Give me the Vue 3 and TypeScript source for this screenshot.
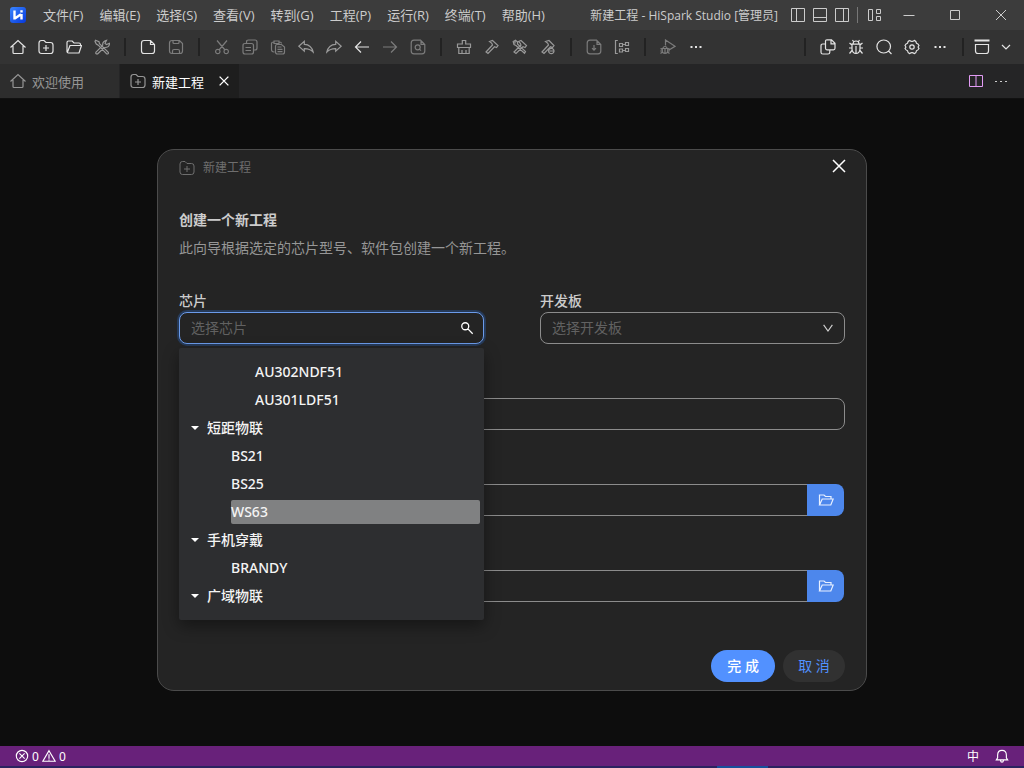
<script setup lang="ts">
import { ref } from 'vue'

interface Tool {
  icon: string
  label: string
  tone?: 'bright' | 'dim' | 'mid'
}

const icons: Record<string, string> = {
  home: 'M.5 8.500 8 1.500 15.500 8.500M3 7v6.500q0 1 1 1h8q1 0 1-1V7',
  newProject: 'M1 4q0-2.500 2.500-2.500H6L8 3.500h4.500Q15 3.500 15 6v6q0 2.500-2.500 2.500h-9Q1 14.500 1 12zM8 6v6M5 9h6',
  folder: 'M1 13V3.500Q1 2 2.500 2h3.700l1.800 2h5q1.500 0 1.500 1.500V6.500M1.500 13 4 6.500h11.500l-2.500 7.500H2.500Q1 14 1 12.500',
  tools: 'M1.500 13.700 8.800 6.300M3.500 15 10.300 8.500M1.500 13.700q.5 1.500 2 1.300M8.800 6.300Q8 2.500 12.500 1.300l-1.500 3 1.500 1.300 3-1.300q0 4.500-5.200 4.200M1.500 1.300 5 2.800l.5 2 8.800 8.400q.5 2-1.600 1.800L4.300 6.200 2.300 5 1 2.500z',
  file: 'M10.500 1.500H4Q1.500 1.500 1.500 4v8q0 2.500 2.500 2.500h8q2.500 0 2.500-2.500V5.500zM10.500 1.500v4h4',
  save: 'M1.500 4q0-2.500 2.500-2.500h7.500l3 3V12q0 2.500-2.500 2.500H4Q1.500 14.500 1.500 12zM5 1.500v2q0 1 1 1h4q1 0 1-1v-2M4.500 14.500V12q0-1.500 1.500-1.500h4q1.500 0 1.500 1.500v2.500',
  cut: 'M3 1.500 11 11M13 1.500 5 11M6 12.500a2.200 2.200 0 1 1-4.400 0a2.200 2.200 0 1 1 4.400 0M14.400 12.500a2.200 2.200 0 1 1-4.400 0a2.200 2.200 0 1 1 4.400 0',
  copy: 'M4.500 4V3q0-2 2-2H13q2 0 2 2v6q0 2-2 2h-1.500M3 4.500h6.500q2 0 2 2V13q0 2-2 2H3q-2 0-2-2V6.500q0-2 2-2zM3.500 8.500H9M3.500 11.500H9',
  paste: 'M4.500 13H4q-2.500 0-2.500-2.500v-6Q1.500 3 3.500 3M9.500 3q2 0 2 1.500M4 4.500V2h5v2.500zM7 5.500h4.500L14.500 8v5q0 2-2 2H7.500q-2 0-2-2V7.500q0-2 1.500-2zM7.500 8h4M7.500 10.300h5M7.500 12.600h5',
  undo: 'M.8 7.200 6.300 2.300V5.300Q13.500 5.500 15.200 13.200 11.500 9.500 6.300 9.700v2.500z',
  redo: 'M15.200 7.200 9.700 2.300V5.300Q2.500 5.500.8 13.200 4.500 9.500 9.700 9.700v2.500z',
  left: 'M15 8H1.500M7 2.500 1.500 8 7 13.500',
  right: 'M1 8h13.500M9 2.500 14.500 8 9 13.500',
  findFile: 'M10.500 1.200H4Q1.200 1.200 1.200 4v8q0 2.800 2.800 2.800h8q2.800 0 2.800-2.800V5.500zM11 1.500v3.800h3.500M10.200 8.300a2.500 2.500 0 1 1-5 0a2.500 2.500 0 1 1 5 0M9.500 10.200l1.500 1.500',
  clean: 'M6.300 5V1.500h3.400V5h4.800v3.500h-13V5zM2.800 8.500V14.500h10.400v-6M6 14.500V11M10 14.500V11',
  hammer: 'M5.500 2.500 8.500 1.500 14 6.500 12.500 8.500 10.500 7.800 4 14.500 2 13 8.500 6 7.800 4.300z',
  hammers: 'M6.500 2.500 9 1.500 14.500 6.500 13 8.500 11 7.800 4 14.500 2 13 9 6 8.300 4.300zM1.200 2.500 3.500 1.300 5.500 3v2L13.500 12.500 12.500 14.200 4 6.500 2 5.500zM3 2v2.500',
  hammerStop: 'M5.500 2.500 9 1.500 14 6.500 12.500 8.500 10.500 7.800 4 14.500 2 13 8.500 6 7.800 4.300zM14 12a2.700 2.700 0 1 1-5.400 0a2.700 2.700 0 1 1 5.400 0M9.500 12h4',
  download: 'M10.500 1.200H4Q1.200 1.200 1.200 4v8q0 2.800 2.800 2.800h8q2.800 0 2.800-2.800V5.500zM11 1.500v3.800h3.500M8 6v5M6 9.200l2 2 2-2',
  memory: 'M3.800 1.500H1.500v13h2.300M5.500 4.500h3v3h-3zM11.500 3.500h3v3h-3zM5.500 10h3v3h-3zM11.500 9.500h3v3h-3zM8.500 5.500h3M8.500 11.500h3',
  debugRun: 'M5.500 6.500V1L15 7.300 9 11M3 9.500a2 2 0 0 1 4 0M2.300 9.500h5.400v3q-.5 2-2.700 2-2.200 0-2.700-2zM.5 9.500l1.800 1M9.500 9.500l-1.800 1M.5 14.500l2-1.500M9.500 14.500l-2-1.500M5 10v4M.3 12h2M7.700 12h2',
  pages: 'M7 .8h4.500L15 4.300v5q0 1.500-1.500 1.500H7Q5.500 10.800 5.500 9.300v-7Q5.500.8 7 .8M11 1v3.800h4M5.500 5H2.800Q1 5 1 6.800V13.200Q1 15 2.800 15H8q1.800 0 1.800-1.800V11',
  bug: 'M5 5a3 3 0 0 1 6 0M4 5.200h8v5q-.5 4-4 4.300-3.500-.3-4-4.300zM8 7v7.500M4 6 1.500 4M12 6l2.500-2M1 9h3M12 9h3M4 11.500 1.500 14.500M12 11.500l2.500 3M5.500 2.500 4.500 1M10.500 2.500l1-1.500',
  search: 'M14.500 7.500a6.800 6.500 0 1 1-13.600 0a6.800 6.500 0 1 1 13.600 0M12.500 12l3 3',
  gear: 'M5.700 1.400Q8 3.500 10.300 1.400q2 .7 2.200 2.900 2 .7 2.500 2.300-1.700 1.400 0 2.800-.5 1.600-2.500 2.300-.2 2.200-2.200 2.900Q8 12.500 5.700 14.600q-2-.7-2.200-2.900Q1.500 11 1 9.400q1.700-1.400 0-2.800.5-1.600 2.500-2.300.2-2.200 2.200-2.900M10.200 8a2.200 2.200 0 1 1-4.400 0a2.200 2.200 0 1 1 4.400 0',
  more: 'M2.500 7h2v2h-2zM7 7h2v2H7zM11.500 7h2v2h-2z',
  moreThin: 'M2 8h2v1H2zM7 8h2v1H7zM12 8h2v1h-2z',
  panel: 'M.5 1h15M.5 2h15M1.500 5.500V12q0 2.500 2.500 2.500h8q2.500 0 2.500-2.500V5.500z',
  down: 'M4 6l4 4 4-4',
  sideLeft: 'M1.500 1.500h13v13h-13zM6.500 1.500v13',
  bottomPane: 'M1.500 1.500h13v13h-13zM1.500 10.500h13',
  sideRight: 'M1.500 1.500h13v13h-13zM9.500 1.500v13',
  layout: 'M1.500 2.500h4v11h-4zM9.500 2.500h4v4h-4zM9.500 9.500h4v4h-4z',
  minimize: 'M2.500 8.500h11',
  maximize: 'M3.500 3.500h9v9h-9z',
  close: 'M3 3l10 10M13 3 3 13',
  split: 'M1.500 2.500h13v11h-13zM8 2.500v11',
  glass: 'M10 6a4 4 0 1 1-8 0a4 4 0 1 1 8 0M9 9l5.500 5.500',
  openDir: 'M1.500 13V3h4.500l1.500 1.500h5.500V7M1.500 13 4.200 7h11L12.800 13z',
  error: 'M14.500 8a6.500 6.500 0 1 1-13 0a6.500 6.500 0 1 1 13 0M5 5l6 6M11 5l-6 6',
  warning: 'M8 2 15 14H1zM8 6v5M8 12v1',
  bell: 'M1.500 12.500h13L13 10V7Q13 1.500 8 1.500T3 7v3zM6.300 13q.2 2 1.700 2t1.700-2',
}

const menus: string[] = ['文件(F)', '编辑(E)', '选择(S)', '查看(V)', '转到(G)', '工程(P)', '运行(R)', '终端(T)', '帮助(H)']

const leftTools: Tool[][] = [
  [
    { icon: 'home', label: '主页', tone: 'bright' },
    { icon: 'newProject', label: '新建工程', tone: 'bright' },
    { icon: 'folder', label: '打开工程', tone: 'bright' },
    { icon: 'tools', label: '工具', tone: 'mid' },
  ],
  [
    { icon: 'file', label: '新建文件', tone: 'bright' },
    { icon: 'save', label: '保存' },
  ],
  [
    { icon: 'cut', label: '剪切' },
    { icon: 'copy', label: '复制' },
    { icon: 'paste', label: '粘贴' },
    { icon: 'undo', label: '撤销', tone: 'mid' },
    { icon: 'redo', label: '重做', tone: 'mid' },
    { icon: 'left', label: '后退', tone: 'bright' },
    { icon: 'right', label: '前进' },
    { icon: 'findFile', label: '查找' },
  ],
  [
    { icon: 'clean', label: '清理', tone: 'mid' },
    { icon: 'hammer', label: '编译', tone: 'mid' },
    { icon: 'hammers', label: '重新编译', tone: 'mid' },
    { icon: 'hammerStop', label: '停止编译', tone: 'mid' },
  ],
  [
    { icon: 'download', label: '烧录' },
    { icon: 'memory', label: '内存分析', tone: 'mid' },
  ],
  [
    { icon: 'debugRun', label: '调试' },
    { icon: 'more', label: '更多', tone: 'bright' },
  ],
]

const rightTools: Tool[] = [
  { icon: 'pages', label: '资源管理器' },
  { icon: 'bug', label: '调试视图' },
  { icon: 'search', label: '搜索' },
  { icon: 'gear', label: '设置' },
  { icon: 'more', label: '更多视图' },
]

const paneTools: Tool[] = [
  { icon: 'sideLeft', label: '左侧栏' },
  { icon: 'bottomPane', label: '底部面板' },
  { icon: 'sideRight', label: '右侧栏' },
]

const windowTools: Tool[] = [
  { icon: 'minimize', label: '最小化' },
  { icon: 'maximize', label: '最大化' },
  { icon: 'close', label: '关闭窗口' },
]

const chips = [
  { name: 'AU302NDF51', level: 3 },
  { name: 'AU301LDF51', level: 3 },
  { name: '短距物联', level: 1 },
  { name: 'BS21', level: 2 },
  { name: 'BS25', level: 2 },
  { name: 'WS63', level: 2 },
  { name: '手机穿戴', level: 1 },
  { name: 'BRANDY', level: 2 },
  { name: '广域物联', level: 1 },
]

const hovered = ref('WS63')
const chip = ref('')
const board = ref('')
const projectName = ref('')
const projectPath = ref('')
const packagePath = ref('')
</script>

<template>
  <div class="app">
    <header class="titlebar">
      <svg class="logo" viewBox="0 0 16 16" aria-hidden="true">
        <defs>
          <linearGradient id="logo-fill" x1="0" y1="0" x2="1" y2="1">
            <stop offset="0" stop-color="#3a86ff" />
            <stop offset="1" stop-color="#0638dc" />
          </linearGradient>
        </defs>
        <rect width="16" height="16" rx="3" fill="url(#logo-fill)" />
        <path d="M4.500 3.500v9M4.800 11.500 11 7.200M11.500 7v5.500" fill="none" stroke="#fff" stroke-width="2.400" />
        <path d="M10.300 3.200h2.400v2.400h-2.400z" fill="#fff" />
      </svg>
      <nav class="menus">
        <button v-for="m in menus" :key="m" class="menu" type="button">{{ m }}</button>
      </nav>
      <span class="title">新建工程 - HiSpark Studio [管理员]</span>
      <div class="panes">
        <button v-for="t in paneTools" :key="t.icon" class="pane" type="button" :aria-label="t.label">
          <svg class="icon" viewBox="0 0 16 16"><path :d="icons[t.icon]" /></svg>
        </button>
        <span class="rule"></span>
        <button class="pane" type="button" aria-label="布局">
          <svg class="icon" viewBox="0 0 16 16"><path :d="icons.layout" /></svg>
        </button>
      </div>
      <button v-for="t in windowTools" :key="t.icon" class="win" type="button" :aria-label="t.label">
        <svg class="icon" viewBox="0 0 16 16"><path :d="icons[t.icon]" /></svg>
      </button>
    </header>

    <div class="toolbar" role="toolbar">
      <div v-for="(group, i) in leftTools" :key="i" class="group">
        <button v-for="t in group" :key="t.icon" class="tool" :class="t.tone ?? 'dim'" type="button" :aria-label="t.label">
          <svg class="icon" :class="{ solid: t.icon === 'more' }" viewBox="0 0 16 16"><path :d="icons[t.icon]" /></svg>
        </button>
      </div>
      <div class="group end">
        <button v-for="t in rightTools" :key="t.icon" class="tool bright" type="button" :aria-label="t.label">
          <svg class="icon" :class="{ solid: t.icon === 'more' }" viewBox="0 0 16 16"><path :d="icons[t.icon]" /></svg>
        </button>
      </div>
      <div class="group">
        <button class="tool narrow bright" type="button" aria-label="面板">
          <svg class="icon" viewBox="0 0 16 16"><path :d="icons.panel" /></svg>
        </button>
        <button class="tool bright" type="button" aria-label="展开">
          <svg class="icon" viewBox="0 0 16 16"><path :d="icons.down" /></svg>
        </button>
      </div>
    </div>

    <div class="tabs">
      <div class="tab">
        <svg class="icon" viewBox="0 0 16 16"><path :d="icons.home" /></svg>
        <span>欢迎使用</span>
      </div>
      <div class="tab active">
        <svg class="icon" viewBox="0 0 16 16"><path :d="icons.newProject" /></svg>
        <span>新建工程</span>
        <button class="tab-close" type="button" aria-label="关闭标签页">
          <svg class="icon" viewBox="0 0 16 16"><path :d="icons.close" /></svg>
        </button>
      </div>
      <div class="tab-actions">
        <button class="split" type="button" aria-label="拆分编辑器">
          <svg class="icon" viewBox="0 0 16 16"><path :d="icons.split" /></svg>
        </button>
        <button type="button" aria-label="更多操作">
          <svg class="icon solid" viewBox="0 0 16 16"><path :d="icons.moreThin" /></svg>
        </button>
      </div>
    </div>

    <main class="workspace">
      <section class="dialog" role="dialog" aria-labelledby="dialog-title">
        <div class="dialog-head">
          <svg class="icon" viewBox="0 0 16 16"><path :d="icons.newProject" /></svg>
          <span id="dialog-title">新建工程</span>
          <button class="dialog-close" type="button" aria-label="关闭">
            <svg viewBox="0 0 16 16"><path d="M2 2l12 12M14 2 2 14" /></svg>
          </button>
        </div>
        <h1>创建一个新工程</h1>
        <p class="lead">此向导根据选定的芯片型号、软件包创建一个新工程。</p>

        <form class="form" @submit.prevent>
          <div class="field">
            <label for="chip">芯片</label>
            <div class="control">
              <input id="chip" v-model="chip" class="box focused" type="text" placeholder="选择芯片" autocomplete="off" />
              <svg class="suffix" viewBox="0 0 16 16"><path :d="icons.glass" /></svg>
              <ul class="dropdown" role="tree">
                <li
                  v-for="c in chips"
                  :key="c.name"
                  role="treeitem"
                  class="node"
                  :class="['level' + c.level, { hovered: hovered === c.name }]"
                  @mouseenter="hovered = c.name"
                >
                  <svg v-if="c.level === 1" class="caret" viewBox="0 0 8 8"><path d="M0 2h8L4 6z" /></svg>
                  <span class="name" @click="chip = c.name">{{ c.name }}</span>
                </li>
              </ul>
            </div>
          </div>
          <div class="field">
            <label for="board">开发板</label>
            <div class="control">
              <select id="board" v-model="board" class="box">
                <option value="">选择开发板</option>
              </select>
              <svg class="suffix arrow" viewBox="0 0 16 16"><path d="M3 4.500 8 11.500 13 4.500" /></svg>
            </div>
          </div>
          <input v-model="projectName" class="box wide" type="text" aria-label="工程名" />
          <div class="wide picker">
            <input v-model="projectPath" class="box" type="text" aria-label="工程路径" />
            <button type="button" aria-label="浏览工程路径">
              <svg class="icon" viewBox="0 0 16 16"><path :d="icons.openDir" /></svg>
            </button>
          </div>
          <div class="wide picker">
            <input v-model="packagePath" class="box" type="text" aria-label="软件包" />
            <button type="button" aria-label="浏览软件包">
              <svg class="icon" viewBox="0 0 16 16"><path :d="icons.openDir" /></svg>
            </button>
          </div>
        </form>

        <div class="actions">
          <button class="primary" type="button">完 成</button>
          <button class="secondary" type="button">取 消</button>
        </div>
      </section>
    </main>

    <footer>
      <div class="status">
        <button class="problems" type="button">
          <svg class="icon" viewBox="0 0 16 16"><path :d="icons.error" /></svg>
          <span>0</span>
          <svg class="icon" viewBox="0 0 16 16"><path :d="icons.warning" /></svg>
          <span>0</span>
        </button>
        <button class="lang" type="button">中</button>
        <button type="button" aria-label="通知">
          <svg class="icon" viewBox="0 0 16 16"><path :d="icons.bell" /></svg>
        </button>
      </div>
      <div class="strip"><span></span></div>
    </footer>
  </div>
</template>

<style>
body {
  margin: 0;
  background: #0d0d0d;
}
</style>

<style scoped>
.app {
  display: flex;
  flex-direction: column;
  min-height: 100vh;
  font-family: "Noto Sans", "Noto Sans CJK SC", sans-serif;
  font-size: 13px;
  color: #ccc;
}
.app * {
  box-sizing: border-box;
}
button {
  display: flex;
  align-items: center;
  justify-content: center;
  margin: 0;
  padding: 0;
  border: 0;
  background: none;
  color: inherit;
  font: inherit;
  white-space: nowrap;
}
svg {
  flex: none;
}
.icon {
  width: 16px;
  height: 16px;
  fill: none;
  stroke: currentColor;
  stroke-width: 1;
}
.icon.solid {
  fill: currentColor;
  stroke: none;
}
.titlebar {
  display: flex;
  align-items: stretch;
  height: 30px;
  padding-left: 10px;
  background: #3c3c3c;
  font-family: "Open Sans", "Noto Sans CJK SC", sans-serif;
}
.logo {
  width: 16px;
  height: 16px;
  align-self: center;
  margin-right: 9px;
}
.menus {
  display: flex;
}
.menu {
  padding: 0 8px 2px;
}
.title {
  align-self: center;
  margin-left: auto;
  margin-right: 9px;
  font-size: 12px;
  white-space: nowrap;
}
.panes {
  display: flex;
  align-items: center;
}
.pane {
  width: 22px;
  height: 30px;
}
.rule {
  width: 1px;
  height: 16px;
  margin: 0 6px 0 4px;
  background: #777;
}
.win {
  width: 46px;
}
.toolbar {
  display: flex;
  align-items: center;
  height: 34px;
  padding: 0 4px;
  background: #333;
}
.toolbar .icon:not(.solid) {
  stroke-width: 1.200;
}
.group {
  display: flex;
  align-items: center;
}
.group.end {
  margin-left: auto;
}
.group + .group::before {
  content: "";
  width: 2px;
  height: 18px;
  margin: 0 8px;
  background: #222;
}
.tool {
  width: 28px;
  height: 28px;
}
.tool.narrow {
  width: 20px;
}
.bright {
  color: #e4e4e4;
}
.mid {
  color: #999;
}
.dim {
  color: #7c7c7c;
}
.tabs {
  display: flex;
  height: 35px;
  border-bottom: 1px solid #111;
  background: #252526;
}
.tab {
  display: flex;
  align-items: center;
  gap: 6px;
  width: 120px;
  padding-left: 10px;
  border-right: 1px solid #252526;
  background: #2d2d2d;
  color: #969696;
  white-space: nowrap;
}
.tab.active {
  background: #1e1e1e;
  color: #fff;
}
.tab > .icon {
  color: #969696;
  stroke-width: 1.200;
}
.tab-close {
  width: 20px;
  height: 20px;
  margin-left: 4px;
}
.tab-close .icon {
  width: 14px;
  height: 14px;
  stroke-width: 1.600;
}
.tab-actions {
  display: flex;
  align-items: center;
  gap: 9px;
  margin-left: auto;
  padding-right: 15px;
}
.split {
  color: #e39cf5;
}
.workspace {
  flex: 1;
  display: flex;
  justify-content: center;
  align-items: flex-start;
  padding: 50px 24px;
  background: #0d0d0d;
}
.dialog {
  width: 100%;
  max-width: 710px;
  padding: 0 21px 8px;
  border: 1px solid #4b4b4b;
  border-radius: 17px;
  background: #242424;
  font-size: 14px;
  line-height: 22px;
}
.dialog-head {
  display: flex;
  align-items: center;
  gap: 8px;
  height: 36px;
  font-size: 12px;
  color: #6e6e6e;
}
.dialog-close {
  width: 12px;
  height: 32px;
  margin-left: auto;
  align-self: flex-start;
}
.dialog-close svg {
  width: 16px;
  height: 16px;
  fill: none;
  stroke: #fff;
  stroke-width: 1.500;
}
h1 {
  margin: 23px 0 6px;
  font-size: 14px;
  font-weight: 700;
}
.lead {
  margin: 0;
  color: #969696;
}
.form {
  display: grid;
  grid-template-columns: 1fr 1fr;
  column-gap: 56px;
  row-gap: 54px;
  margin-top: 31px;
}
.wide {
  grid-column: 1 / -1;
}
.field {
  display: flex;
  flex-direction: column;
  font-weight: 500;
}
.control {
  position: relative;
  font-weight: 400;
}
.box {
  display: block;
  width: 100%;
  height: 32px;
  padding: 0 11px;
  border: 1px solid #8c8c8c;
  border-radius: 8px;
  outline: none;
  background: #242424;
  color: #ddd;
  font: inherit;
}
.box::placeholder,
select.box {
  color: #616161;
  opacity: 1;
}
select.box {
  appearance: none;
}
.box.focused {
  padding-bottom: 2px;
  border-color: #6b9bea;
  box-shadow: 0 0 0 2px #263a58;
}
.suffix {
  position: absolute;
  top: 9px;
  right: 10px;
  width: 14px;
  height: 14px;
  fill: none;
  stroke: #fff;
  stroke-width: 1.500;
  pointer-events: none;
}
.suffix.arrow {
  stroke: #d0d0d0;
  stroke-width: 1.300;
}
.dropdown {
  position: absolute;
  z-index: 2;
  top: 36px;
  left: 0;
  right: 0;
  display: flex;
  flex-direction: column;
  gap: 4px;
  margin: 0;
  padding: 12px 4px 12px 12px;
  border-radius: 2px;
  background: #2d2e30;
  box-shadow: 0 6px 16px rgba(0, 0, 0, 0.4);
  color: #f4f4f4;
  font-weight: 500;
  line-height: 24px;
  list-style: none;
}
.node {
  display: flex;
  align-items: center;
}
.level2 {
  margin-left: 40px;
}
.level3 {
  margin-left: 64px;
}
.hovered {
  border-radius: 2px;
  background: #808182;
}
.caret {
  width: 8px;
  height: 8px;
  margin-right: 8px;
  fill: #fff;
}
.picker {
  display: flex;
  padding-right: 1px;
}
.picker .box {
  flex: 1;
  border-right: 0;
  border-radius: 8px 0 0 8px;
}
.picker button {
  width: 37px;
  height: 32px;
  border-radius: 0 8px 8px 0;
  background: #4d87ec;
  color: #e8f0ff;
}
.picker .icon {
  stroke-width: 1.200;
}
.actions {
  display: flex;
  justify-content: flex-end;
  gap: 8px;
  margin-top: 48px;
}
.actions button {
  min-width: 62px;
  height: 32px;
  padding: 0 15px;
  border-radius: 16px;
}
.actions .primary {
  padding: 0 16px;
  background: #5291ff;
  color: #fff;
  font-weight: 500;
}
.secondary {
  background: #313131;
  color: #5291ff;
}
.status {
  display: flex;
  align-items: center;
  height: 20px;
  padding: 0 15px;
  background: #68217a;
  color: #fff;
  font-size: 12px;
}
.problems {
  gap: 3px;
}
.status .icon {
  width: 14px;
  height: 14px;
  stroke-width: 1.300;
}
.lang {
  margin-left: auto;
  margin-right: 16px;
}
.strip {
  height: 2px;
  background: #2b2260;
}
.strip span {
  display: block;
  width: 5%;
  height: 2px;
  margin-left: 70%;
  background: #17509c;
}
</style>
